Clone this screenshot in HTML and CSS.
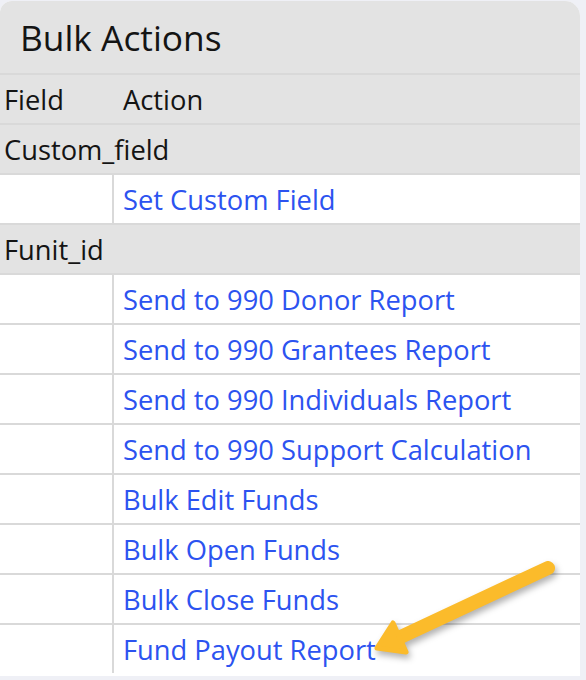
FILE: index.html
```html
<!DOCTYPE html>
<html>
<head>
<meta charset="utf-8">
<link rel="stylesheet" href="styles.css">
</head>
<body>
<div class="card">
  <div class="title">Bulk Actions</div>
  <div class="row head"><div class="c1">Field</div><div class="c2">Action</div></div>
  <div class="row group"><div class="full">Custom_field</div></div>
  <div class="row item"><div class="c1"></div><div class="c2"><a href="#">Set Custom Field</a></div></div>
  <div class="row group"><div class="full">Funit_id</div></div>
  <div class="row item"><div class="c1"></div><div class="c2"><a href="#">Send to 990 Donor Report</a></div></div>
  <div class="row item"><div class="c1"></div><div class="c2"><a href="#">Send to 990 Grantees Report</a></div></div>
  <div class="row item"><div class="c1"></div><div class="c2"><a href="#">Send to 990 Individuals Report</a></div></div>
  <div class="row item"><div class="c1"></div><div class="c2"><a href="#">Send to 990 Support Calculation</a></div></div>
  <div class="row item"><div class="c1"></div><div class="c2"><a href="#">Bulk Edit Funds</a></div></div>
  <div class="row item"><div class="c1"></div><div class="c2"><a href="#">Bulk Open Funds</a></div></div>
  <div class="row item"><div class="c1"></div><div class="c2"><a href="#">Bulk Close Funds</a></div></div>
  <div class="row item last"><div class="c1"></div><div class="c2"><a href="#">Fund Payout Report</a></div></div>
</div>
<svg class="arrow" width="586" height="680" viewBox="0 0 586 680">
  <g class="arrow-g">
    <line x1="548" y1="568" x2="392" y2="641" stroke="#fbbb2b" stroke-width="14" stroke-linecap="round"/>
    <polygon points="377,648 393,623 406,652" fill="#fbbb2b" stroke="#fbbb2b" stroke-width="5" stroke-linejoin="round"/>
  </g>
</svg>
</body>
</html>
```
FILE: styles.css
```css
html, body {
  margin: 0;
  padding: 0;
}
body {
  background: #eff0f6;
  width: 586px;
  height: 680px;
  overflow: hidden;
  position: relative;
  font-family: "Open Sans", "Noto Sans", sans-serif;
  color: #141414;
}
.card {
  margin-top: 1px;
  width: 580px;
  background: #fff;
  border-radius: 12px 15px 0 0;
  overflow: hidden;
  padding-bottom: 3px;
}
.title {
  height: 72px;
  background: #e3e3e3;
  display: flex;
  align-items: center;
  padding-left: 20px;
  font-size: 35.3px;
}
.row {
  display: flex;
  height: 48px;
  border-top: 2px solid #d9d9d9;
  font-size: 27.3px;
}
.head, .group {
  background: #e3e3e3;
}
.c1 {
  width: 114px;
  flex: none;
  display: flex;
  align-items: center;
  padding-left: 4px;
  box-sizing: border-box;
}
.item .c1 {
  border-right: 2px solid #d9d9d9;
}
.c2 {
  display: flex;
  align-items: center;
  padding-left: 9px;
}
.full {
  display: flex;
  align-items: center;
  padding-left: 4px;
}
a {
  color: #2c53f0;
  text-decoration: none;
}
.arrow {
  position: absolute;
  left: 0;
  top: 0;
  pointer-events: none;
}
.arrow-g {
  filter: drop-shadow(2px 4px 3px rgba(0, 0, 0, 0.3));
}
```
